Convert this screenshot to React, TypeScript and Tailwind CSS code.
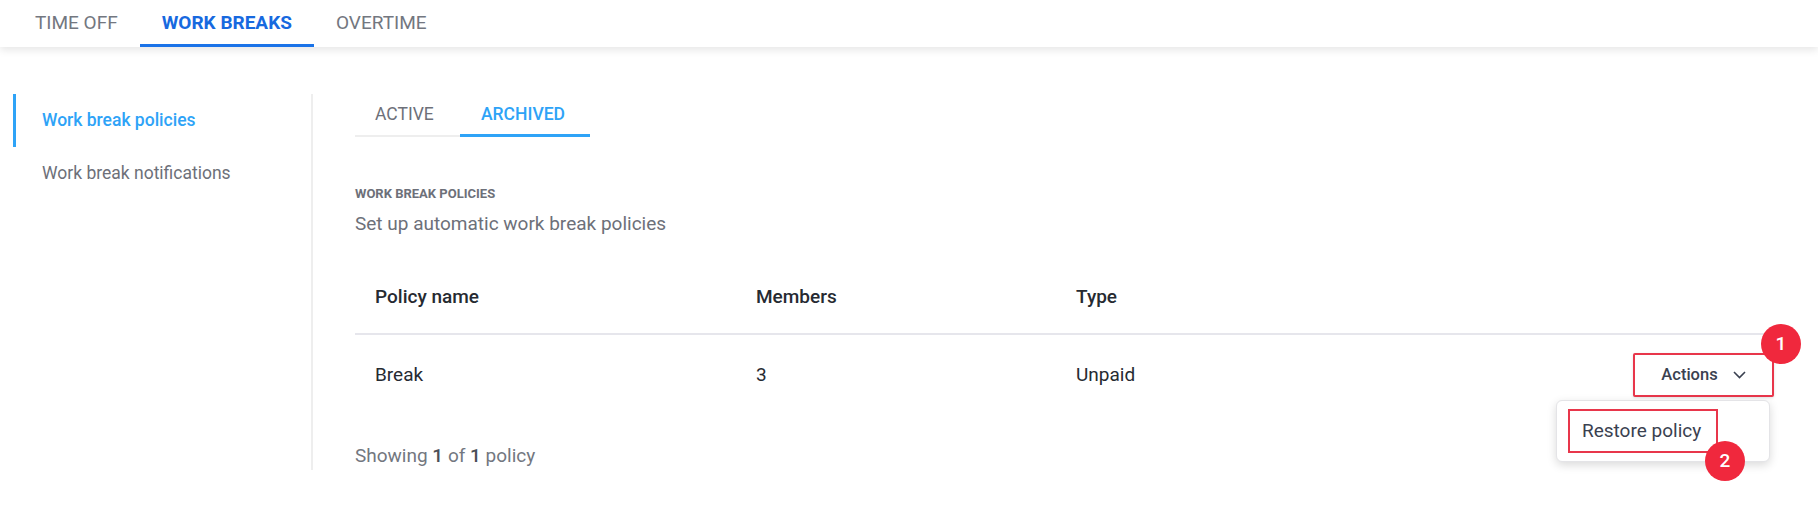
import React from "react";

const font = { fontFamily: "Roboto, 'Noto Sans', Arial, sans-serif" };

function TopTabs() {
  const tabs = ["TIME OFF", "WORK BREAKS", "OVERTIME"];
  return (
    <div className="relative z-10 h-[47px] bg-white shadow-[0_3px_8px_rgba(0,0,0,0.10)] pl-[13px] flex">
      {tabs.map((t) => {
        const active = t === "WORK BREAKS";
        return (
          <div
            key={t}
            className={
              active
                ? "h-full px-[22px] flex items-center text-[19px] font-bold text-[#1769df] border-b-[3px] border-[#1a73e8] pt-[3px]"
                : "h-full px-[22px] flex items-center text-[19px] text-[#737780]"
            }
          >
            {t}
          </div>
        );
      })}
    </div>
  );
}

function Sidebar() {
  return (
    <div className="w-[313px] shrink-0 pl-[13px] border-r-2 border-[#eeeeee] self-start h-[376px]">
      <div className="h-[53px] border-l-[3px] border-[#2ea3f7] pl-[26px] flex items-center text-[17.5px] font-medium text-[#2ea3f7]">
        Work break policies
      </div>
      <div className="h-[53px] pl-[29px] flex items-center text-[17.5px] text-[#6d7079]">
        Work break notifications
      </div>
    </div>
  );
}

function Badge({ n, className }: { n: string; className: string }) {
  return (
    <div
      className={
        "absolute w-[40px] h-[40px] rounded-full bg-[#f0283d] text-white text-[19px] font-medium flex items-center justify-center " +
        className
      }
    >
      {n}
    </div>
  );
}

function ActionsCell() {
  return (
    <div className="relative">
      <button className="h-[44px] w-[141px] border-2 border-[#e8364b] bg-white rounded-[2px] shadow-[0_1px_3px_rgba(0,0,0,0.12)] flex items-center justify-center gap-[15px] text-[16.5px] font-medium text-[#3a4150]">
        <span>Actions</span>
        <svg width="13" height="8" viewBox="0 0 13 8" fill="none">
          <path d="M1 1l5.5 5.5L12 1" stroke="#3a4150" strokeWidth="1.6" />
        </svg>
      </button>
      <Badge n="1" className="left-[128px] top-[-29px]" />
      <div className="absolute left-[-77px] top-[47px] w-[214px] h-[62px] bg-white rounded-[6px] border border-[#e4e4e7] shadow-[0_3px_10px_rgba(0,0,0,0.15)] px-[11px] pt-[8px]">
        <div className="w-[150px] h-[44px] border-2 border-[#e8364b] flex items-center pl-[12px] text-[19px] text-[#3a4150]">
          Restore policy
        </div>
      </div>
      <Badge n="2" className="left-[72px] top-[88px]" />
    </div>
  );
}

function Main() {
  return (
    <div className="flex-1 pl-[42px] pr-[26px]">
      <div className="flex">
        <div className="h-[43px] w-[105px] border-b-2 border-[#eeeeee] flex items-center pl-[20px] text-[17.5px] text-[#6d7079]">
          ACTIVE
        </div>
        <div className="h-[43px] w-[130px] border-b-[3px] border-[#2ea3f7] pt-[1px] flex items-center pl-[21px] text-[17.5px] font-medium text-[#2ea3f7]">
          ARCHIVED
        </div>
      </div>
      <div className="mt-[49px] text-[13px] leading-[16px] font-bold text-[#6d7079]">
        WORK BREAK POLICIES
      </div>
      <div className="mt-[10px] text-[19px] leading-[24px] text-[#6d7079]">
        Set up automatic work break policies
      </div>
      <div className="mt-[25px]">
        <div className="h-[74px] flex items-center px-[20px] border-b-2 border-[#e6e6ec] text-[19px] font-medium text-[#262a31]">
          <div className="w-[381px]">Policy name</div>
          <div className="w-[320px]">Members</div>
          <div className="flex-1">Type</div>
        </div>
        <div className="h-[80px] flex items-center pl-[20px] pr-[18px] text-[19px] text-[#262a31]">
          <div className="w-[381px]">Break</div>
          <div className="w-[320px]">3</div>
          <div className="flex-1">Unpaid</div>
          <ActionsCell />
        </div>
      </div>
      <div className="mt-[29px] text-[19px] leading-[24px] text-[#737780]">
        Showing <span className="font-medium text-[#4b4f57]">1</span> of{" "}
        <span className="font-medium text-[#4b4f57]">1</span> policy
      </div>
    </div>
  );
}

export default function App() {
  return (
    <div className="w-[1818px] h-[514px] bg-white overflow-hidden" style={font}>
      <TopTabs />
      <div className="flex pt-[47px]">
        <Sidebar />
        <Main />
      </div>
    </div>
  );
}
